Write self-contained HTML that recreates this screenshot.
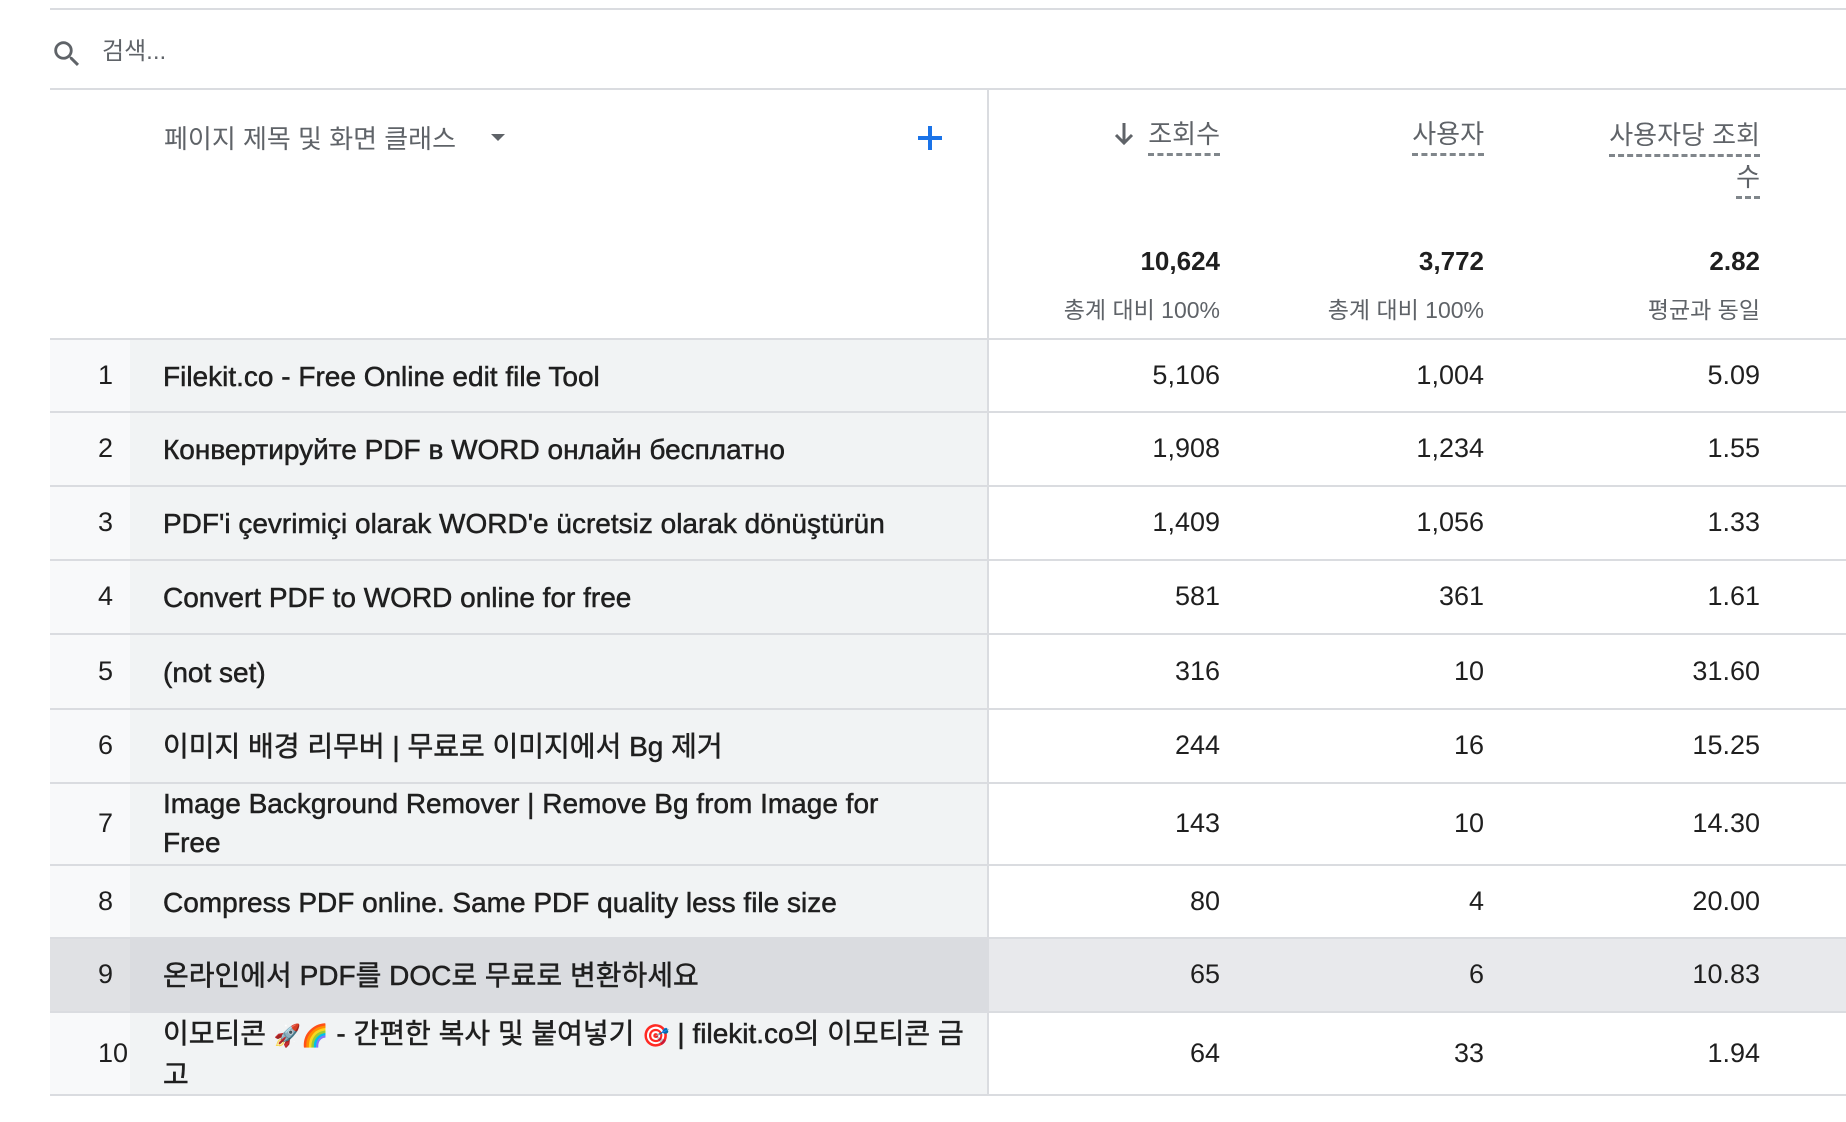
<!DOCTYPE html>
<html><head><meta charset="utf-8"><style>
*{margin:0;padding:0;box-sizing:border-box}
body{width:1846px;height:1122px;background:#fff;position:relative;overflow:hidden;font-family:"Liberation Sans","Noto Sans CJK KR",sans-serif;color:#1f1f1f}
.a{position:absolute;white-space:nowrap}
.hl{position:absolute;left:50px;right:0;height:2px;background:#dadce0}
.num{position:absolute;text-align:right;font-size:27px;white-space:nowrap}
.g{color:#5f6368}
.u{border-bottom:3px dashed #80868b;padding-bottom:4px}
.t{-webkit-text-stroke:0.5px #1f1f1f}
.e{font-size:22px;-webkit-text-stroke:0}
</style></head><body>
<div class="hl" style="top:8px"></div>
<svg class="a" style="left:50px;top:37px" width="34" height="34" viewBox="0 0 24 24"><path d="M15.5 14h-.79l-.28-.27A6.470 6.47 0 0 0 16 9.5 6.5 6.5 0 1 0 9.5 16c1.61 0 3.09-.59 4.23-1.570l.27.28v.79l5 4.99L20.49 19l-4.99-5zm-6 0C7.01 14 5 11.99 5 9.5S7.01 5 9.5 5 14 7.01 14 9.5 11.99 14 9.5 14z" fill="#5f6368"/></svg>
<div class="a g" style="left:102px;top:31px;font-size:24px">검색...</div>
<div class="hl" style="top:88px"></div>
<div class="a" style="left:987px;top:89px;width:2px;height:1006px;background:#dadce0"></div>
<div class="a g" style="left:164px;top:119px;font-size:26px">페이지 제목 및 화면 클래스</div>
<div class="a" style="left:491px;top:134px;width:0;height:0;border-left:7px solid transparent;border-right:7px solid transparent;border-top:7px solid #5f6368"></div>
<div class="a" style="left:918px;top:136px;width:24px;height:4px;background:#1a73e8"></div>
<div class="a" style="left:928px;top:126px;width:4px;height:24px;background:#1a73e8"></div>
<svg class="a" style="left:1112px;top:120px" width="24" height="28" viewBox="0 0 24 28"><path d="M12 3v20M4 15l8 8 8-8" stroke="#5f6368" stroke-width="3" fill="none"/></svg>
<div class="num g" style="right:626px;top:114px;font-size:26px"><span class="u">조회수</span></div>
<div class="num g" style="right:362px;top:114px;font-size:26px"><span class="u">사용자</span></div>
<div class="num g" style="right:86px;top:114px;font-size:26px;line-height:42px"><span class="u">사용자당 조회</span><br><span class="u">수</span></div>
<div class="num" style="right:626px;top:246px;font-weight:bold;font-size:26px">10,624</div>
<div class="num" style="right:362px;top:246px;font-weight:bold;font-size:26px">3,772</div>
<div class="num" style="right:86px;top:246px;font-weight:bold;font-size:26px">2.82</div>
<div class="num g" style="right:626px;top:291px;font-size:23px">총계 대비 100%</div>
<div class="num g" style="right:362px;top:291px;font-size:23px">총계 대비 100%</div>
<div class="num g" style="right:86px;top:291px;font-size:23px">평균과 동일</div>
<div id="rows"></div>
<script>
const rows=[
[339,412,"1","Filekit.co - Free Online edit file Tool","5,106","1,004","5.09"],
[412,486,"2","Конвертируйте PDF в WORD онлайн бесплатно","1,908","1,234","1.55"],
[486,560,"3","PDF'i çevrimiçi olarak WORD'e ücretsiz olarak dönüştürün","1,409","1,056","1.33"],
[560,634,"4","Convert PDF to WORD online for free","581","361","1.61"],
[634,709,"5","(not set)","316","10","31.60"],
[709,783,"6","이미지 배경 리무버 | 무료로 이미지에서 Bg 제거","244","16","15.25"],
[783,865,"7","Image Background Remover | Remove Bg from Image for<br>Free","143","10","14.30"],
[865,938,"8","Compress PDF online. Same PDF quality less file size","80","4","20.00"],
[938,1012,"9","온라인에서 PDF를 DOC로 무료로 변환하세요","65","6","10.83"],
[1012,1095,"10","이모티콘 <span class='e'>🚀🌈</span> - 간편한 복사 및 붙여넣기 <span class='e'>🎯</span> | filekit.co의 이모티콘 금<br>고","64","33","1.94"]];
let h="";
rows.forEach((r,i)=>{const[t,b,n,s,a,c,d]=r;const hh=b-t;const hi=i==8;
h+=`<div class="a" style="left:50px;top:${t}px;width:80px;height:${hh}px;background:${hi?'#e0e1e4':'#f8f9fa'}"></div>`;
h+=`<div class="a" style="left:130px;top:${t}px;width:857px;height:${hh}px;background:${hi?'#dadce0':'#f1f3f4'}"></div>`;
if(hi)h+=`<div class="a" style="left:989px;top:${t}px;right:0;height:${hh}px;background:#e8e9ec"></div>`;
const cy=t+hh/2;
h+=`<div class="a" style="left:98px;top:${cy-17}px;font-size:27px;line-height:32px">${n}</div>`;
const two=s.includes("<br>");
h+=`<div class="a t" style="left:163px;top:${two?cy-40:cy-19}px;font-size:28px;line-height:39px">${s}</div>`;
[[626,a],[362,c],[86,d]].forEach(([rr,v])=>h+=`<div class="num" style="right:${rr}px;top:${cy-17}px;line-height:32px">${v}</div>`);
h+=`<div class="hl" style="top:${t-1}px"></div>`;});
h+=`<div class="hl" style="top:1094px"></div>`;
document.getElementById("rows").innerHTML=h;
</script>
</body></html>
